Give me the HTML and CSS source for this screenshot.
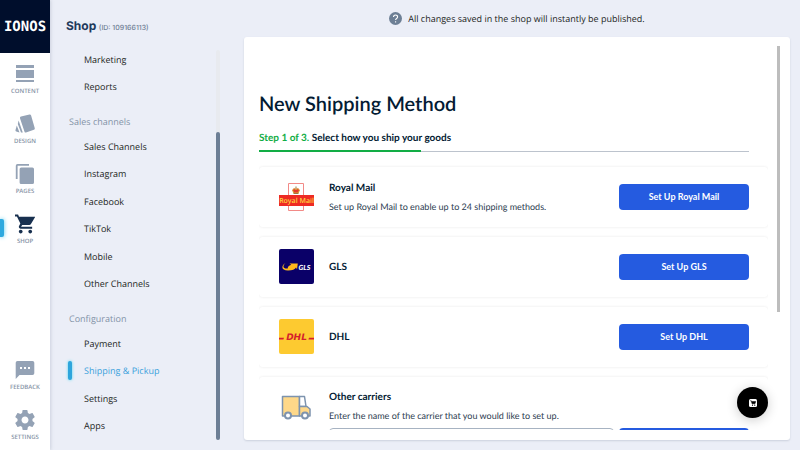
FILE: index.html
```html
<!DOCTYPE html>
<html lang="en">
<head>
<meta charset="utf-8">
<title>New Shipping Method</title>
<link rel="stylesheet" href="styles.css">
</head>
<body>
<div class="app">
  <nav class="rail" aria-label="Main">
    <a class="brand" href="#">IONOS</a>
    <a class="rail-item" href="#">
      <svg viewBox="0 0 20 20"><path d="M1 1h18v3H1zM1 6h18v8H1zM1 16h18v2H1z"/></svg>
      <span>CONTENT</span>
    </a>
    <a class="rail-item" href="#">
      <svg viewBox="0 0 20 20"><path d="M6 2.600 14.500.500q1.200-.2 1.600 1l3.700 12.700q.2 1-.9 1.500L11 18.500q-1 .3-1.500-.8L5 4.200Q4.700 3 6 2.600ZM3.600 6.500 7.800 18.600H6L2.800 10ZM1.800 11.500 4.500 18.600 1.200 17.600Q.200 17 .500 16Z"/></svg>
      <span>DESIGN</span>
    </a>
    <a class="rail-item" href="#">
      <svg viewBox="0 0 20 20"><path d="M14 0H2.500Q.800 0 .800 1.700V15h1.800V1.800H14ZM6.200 3.500h11.200Q19 3.500 19 5.100v13.300q0 1.600-1.600 1.600H6.200q-1.600 0-1.600-1.600V5.100q0-1.600 1.600-1.600Z"/></svg>
      <span>PAGES</span>
    </a>
    <a class="rail-item current" href="#" aria-current="page">
      <svg viewBox="1 2 21 20"><path d="M7 18c-1.100 0-2 .9-2 2s.9 2 2 2 2-.9 2-2-.9-2-2-2zM1 2v2h2l3.600 7.600-1.350 2.450C4.500 15.400 5.500 17 7 17h12v-2H7.400l1.150-2h7.450c.75 0 1.400-.4 1.750-1L22.300 4.500H5.200L4.250 2H1zm16 16c-1.100 0-2 .9-2 2s.9 2 2 2 2-.9 2-2-.9-2-2-2z"/></svg>
      <span>SHOP</span>
    </a>
    <a class="rail-item rail-bottom" href="#">
      <svg viewBox="0 0 20 20"><path fill-rule="evenodd" d="M2.500 1h15Q19.300 1 19.300 2.800v10.400q0 1.800-1.800 1.800H4.500L.700 19V2.800Q.700 1 2.500 1ZM5 7v2h2V7Zm4 0v2h2V7Zm4 0v2h2V7Z"/></svg>
      <span>FEEDBACK</span>
    </a>
    <a class="rail-item" href="#">
      <svg viewBox="2 2 20 20"><path d="M19.430 12.980c.04-.32.07-.64.07-.98s-.03-.66-.07-.98l2.110-1.650c.19-.15.24-.42.12-.64l-2-3.460c-.12-.22-.39-.3-.61-.22l-2.490 1c-.52-.4-1.080-.73-1.690-.98l-.38-2.650A.488.488 0 0 0 14 2h-4c-.25 0-.46.18-.49.42l-.38 2.650c-.61.25-1.170.59-1.690.98l-2.490-1c-.23-.09-.49 0-.61.22l-2 3.460c-.13.22-.07.49.12.64l2.110 1.650c-.04.32-.07.65-.07.98s.03.66.07.98l-2.110 1.650c-.19.15-.24.42-.12.64l2 3.460c.12.22.39.3.61.22l2.490-1c.52.4 1.080.73 1.690.98l.38 2.650c.03.24.24.42.49.42h4c.25 0 .46-.18.49-.42l.38-2.650c.61-.25 1.170-.59 1.690-.98l2.490 1c.23.09.49 0 .61-.22l2-3.460c.12-.22.07-.49-.12-.64l-2.110-1.650zM12 15.500c-1.930 0-3.500-1.570-3.500-3.500s1.570-3.500 3.500-3.500 3.500 1.570 3.500 3.500-1.570 3.500-3.500 3.500z"/></svg>
      <span>SETTINGS</span>
    </a>
  </nav>

  <aside class="sidebar">
    <header class="shop-head"><strong>Shop</strong> <small>(ID: 109166113)</small></header>
    <div class="menu-wrap">
      <nav class="menu" aria-label="Shop">
        <ul>
          <li><a href="#">Marketing</a></li>
          <li><a href="#">Reports</a></li>
        </ul>
        <h2>Sales channels</h2>
        <ul>
          <li><a href="#">Sales Channels</a></li>
          <li><a href="#">Instagram</a></li>
          <li><a href="#">Facebook</a></li>
          <li><a href="#">TikTok</a></li>
          <li><a href="#">Mobile</a></li>
          <li><a href="#">Other Channels</a></li>
        </ul>
        <h2>Configuration</h2>
        <ul>
          <li><a href="#">Payment</a></li>
          <li><a class="active" href="#" aria-current="page">Shipping &amp; Pickup</a></li>
          <li><a href="#">Settings</a></li>
          <li><a href="#">Apps</a></li>
        </ul>
      </nav>
      <div class="track"><div class="thumb"></div></div>
    </div>
  </aside>

  <div class="content">
    <p class="notice">
      <svg viewBox="0 0 24 24"><circle cx="12" cy="12" r="12"/><path class="mark" d="M8.300 9.300c0-5 7.600-4.900 7.600-.3 0 2.800-3.700 3-3.700 5.600M12.200 17.200v2.300"/></svg>
      All changes saved in the shop will instantly be published.
    </p>
    <main class="panel">
      <div class="view">
        <h1>New Shipping Method</h1>
        <div class="step"><p><span>Step 1 of 3.</span> Select how you ship your goods</p>
          <div class="progress"><div class="done"></div></div>
        </div>
        <section class="card">
          <svg class="logo" viewBox="0 0 36 36">
            <path d="M10.500 4.500h15v27h-15z" fill="#fff" stroke="#f28a87" stroke-width="1"/>
            <path d="M1 16h35v11H1z" fill="#ee2a24"/>
            <path d="M14.500 11q1.500-2.500 3.500-.5 2-2 3.500.5l-1.200 3h-4.600z" fill="#e33b2e" stroke="#dba638"/>
            <path d="M18 7.500v2.500M15.500 14.500h5" stroke="#9d7a3e"/>
            <text x="18.500" y="24" text-anchor="middle" class="royal">Royal Mail</text>
          </svg>
          <div class="info"><h3>Royal Mail</h3><p>Set up Royal Mail to enable up to 24 shipping methods.</p></div>
          <button class="primary" type="button">Set Up Royal Mail</button>
        </section>
        <section class="card">
          <svg class="logo" viewBox="0 0 36 36">
            <rect x="1" width="35" height="35" rx="2" fill="#0a0068"/>
            <path d="M7.500 14C3.500 16 2.500 21.500 10 21.500c4.500 0 7-1.300 8-3l1 1.800.800-5.800h-8.300l1.800 1.300c-2.500.9-3.500 2-3.600 3.700-5 .4-5.400-2.700-2.200-5.500z" fill="#ffb91c"/>
            <text x="26.500" y="21" text-anchor="middle" class="gls">GLS</text>
          </svg>
          <div class="info"><h3>GLS</h3></div>
          <button class="primary" type="button">Set Up GLS</button>
        </section>
        <section class="card">
          <svg class="logo" viewBox="0 0 36 36">
            <rect x="1" width="35" height="35" rx="2" fill="#fdca30"/>
            <path d="M1 18.800h5l-.6 1.800H1zM31 18.800h5v1.800h-5.600z" fill="#d51f2c"/>
            <text x="18.500" y="20.600" text-anchor="middle" class="dhl">DHL</text>
          </svg>
          <div class="info"><h3>DHL</h3></div>
          <button class="primary" type="button">Set Up DHL</button>
        </section>
        <section class="card other">
          <svg class="logo" viewBox="0 0 36 36" stroke="#7d93ae" stroke-width="1.500" stroke-linejoin="round">
            <path d="M4.500 6.500h17v19.500h-17z" fill="#fed889"/>
            <path d="M21.500 6.500h5l1.500 10h-6.500z" fill="#fff"/>
            <path d="M21.500 16.500h7.500l3 2.500v7H21.500z" fill="#fed889"/>
            <circle cx="10" cy="25.500" r="3" fill="#fff" stroke-width="2"/>
            <circle cx="27" cy="25.500" r="3" fill="#fff" stroke-width="2"/>
          </svg>
          <div class="other-body">
            <h3>Other carriers</h3>
            <p><label for="carrier">Enter the name of the carrier that you would like to set up.</label></p>
            <form class="row"><input id="carrier" type="text"><button class="primary" type="button" aria-label="Add carrier"></button></form>
          </div>
        </section>
      </div>
      <div class="panel-thumb"></div>
      <button class="fab" type="button" aria-label="Open shop assistant">
        <svg viewBox="0 0 16 16"><rect width="16" height="16" rx="3" fill="#fff"/><path d="M2.500 3.500h2l1.500 6h6l1.500-4.500H5" fill="#000" stroke="#000"/><circle cx="7" cy="12.300" r="1.200"/><circle cx="11.500" cy="12.300" r="1.200"/></svg>
      </button>
    </main>
  </div>
</div>
</body>
</html>
```
FILE: styles.css
```css
* { box-sizing: border-box; }
body, h1, h2, h3, p, ul { margin: 0; padding: 0; }
body { background: #ebeef7; color: #1d1f24; font: 9px/14px "Open Sans", sans-serif; text-rendering: geometricPrecision; }
a { color: inherit; text-decoration: none; }
ul { list-style: none; }
svg { display: block; flex: none; }
.app { display: grid; grid-template-columns: 50px 194px 1fr; grid-template-rows: minmax(0, 1fr); height: 100vh; overflow: hidden; }

.rail { display: flex; flex-direction: column; background: #fff; box-shadow: 1px 0 3px #9da7b866; color: #8592a5; }
.brand { display: flex; align-items: center; justify-content: center; height: 53px; margin-bottom: 7px; background: #000e2c; color: #fff; font: 700 14px "DejaVu Sans Mono", monospace; }
.rail-item { position: relative; display: flex; flex-direction: column; align-items: center; height: 50px; padding-top: 4px; font-size: 6px; line-height: 8px; font-weight: 600; }
.rail-item svg { width: 20px; height: 20px; margin-bottom: 3px; fill: #94a2b5; }
.rail-item.current svg { fill: #18304f; }
.rail-item.current::before { content: ""; position: absolute; left: 0; top: 9px; width: 4px; height: 18px; border-radius: 0 2px 2px 0; background: #2ea9df; box-shadow: 0 0 4px #4fc9ee; }
.rail-bottom { margin-top: auto; }
.rail-item:last-child { height: 44px; }

.sidebar { display: flex; flex-direction: column; min-height: 0; }
.shop-head { height: 46px; padding: 18px 0 0 16px; color: #1f3a5c; font-family: Inter, sans-serif; }
.shop-head strong { font-size: 12px; line-height: 16px; }
.shop-head small { color: #6f8096; font-size: 7px; font-weight: 500; }
.menu-wrap { display: flex; flex: 1; min-height: 0; padding-bottom: 10px; }
.menu { flex: 1; }
.menu li { display: flex; height: 28px; }
.menu li:nth-child(odd) { height: 27px; }
.menu a { position: relative; flex: 1; display: flex; align-items: center; padding-left: 34px; }
.menu .active { color: #3ba1dc; }
.menu .active::before { content: ""; position: absolute; left: 18px; top: 4px; width: 4px; height: 19px; border-radius: 2px; background: #2ea5dc; box-shadow: 0 0 3px #4fd5ef; }
.menu h2 { height: 32px; padding: 9px 0 0 19px; color: #8393a7; font-size: 9px; line-height: 23px; font-weight: 400; }
.track { display: flex; align-items: flex-end; width: 4px; margin: 4px 24px 0 0; border-radius: 2px; background: #e8eaef; }
.thumb { width: 100%; height: 79%; border-radius: 2px; background: #6c7e95; }

.content { display: flex; flex-direction: column; min-width: 0; padding: 0 10px 10px 0; }
.notice { display: flex; align-items: center; justify-content: center; gap: 6px; height: 37px; font-size: 9px; }
.notice svg { width: 13px; height: 13px; fill: #6d7f95; }
.mark { fill: none; stroke: #fff; stroke-width: 2; }
.panel { position: relative; flex: 1; min-height: 0; padding: 10px 22px 10px 15px; border-radius: 3px; background: #fff; box-shadow: 0 1px 2px #8b96a955; color: #031b33; font-family: Lato, sans-serif; }
.view { height: 100%; overflow: hidden; padding-top: 43px; }
h1 { font-size: 20px; line-height: 28px; font-weight: 600; }
.step { padding: 13px 19px 0 0; font-size: 10px; font-weight: 700; }
.step span { color: #12ad45; }
.progress { height: 2px; margin: 5px 0 15px; background: linear-gradient(#bcc3cd, #bcc3cd) center / 100% 1px no-repeat; }
.done { width: 33%; height: 2px; background: #12ad45; }
.card { display: flex; align-items: center; gap: 15px; height: 60px; margin-bottom: 10px; padding: 0 19px; border-radius: 4px; box-shadow: 0 0 3px #00000018; }
.logo { width: 36px; height: 36px; }
.info { flex: 1; }
.card h3 { font-size: 10px; line-height: 14px; font-weight: 700; }
.card p { margin-top: 5px; font-size: 9px; line-height: 14px; color: #2c3c50; }
.primary { width: 130px; height: 26px; border: 0; border-radius: 4px; background: #255be0; color: #fff; font: 700 9px/14px Lato, sans-serif; }
.other { height: 80px; align-items: flex-start; padding-top: 13px; }
.other-body { flex: 1; }
.row { display: flex; gap: 5px; margin-top: 5px; }
.row input { flex: 1; min-width: 0; height: 26px; border: 1px solid #a7b3c2; border-radius: 4px; }
.panel-thumb { position: absolute; top: 9px; right: 10px; width: 3px; height: 66%; background: #bdbdbd; }
.fab { position: absolute; right: 22px; bottom: 22px; display: grid; place-items: center; width: 31px; height: 31px; padding: 0; border: 0; border-radius: 50%; background: #000; box-shadow: 0 2px 12px #0003; }
.fab svg { width: 8px; height: 8px; }
.royal { fill: #ffd33d; font: 600 7px "Open Sans", sans-serif; }
.gls { fill: #fff; font: italic 900 7px Lato, sans-serif; }
.dhl { fill: #d51f2c; font: italic 900 9px "DejaVu Sans", sans-serif; }
```
